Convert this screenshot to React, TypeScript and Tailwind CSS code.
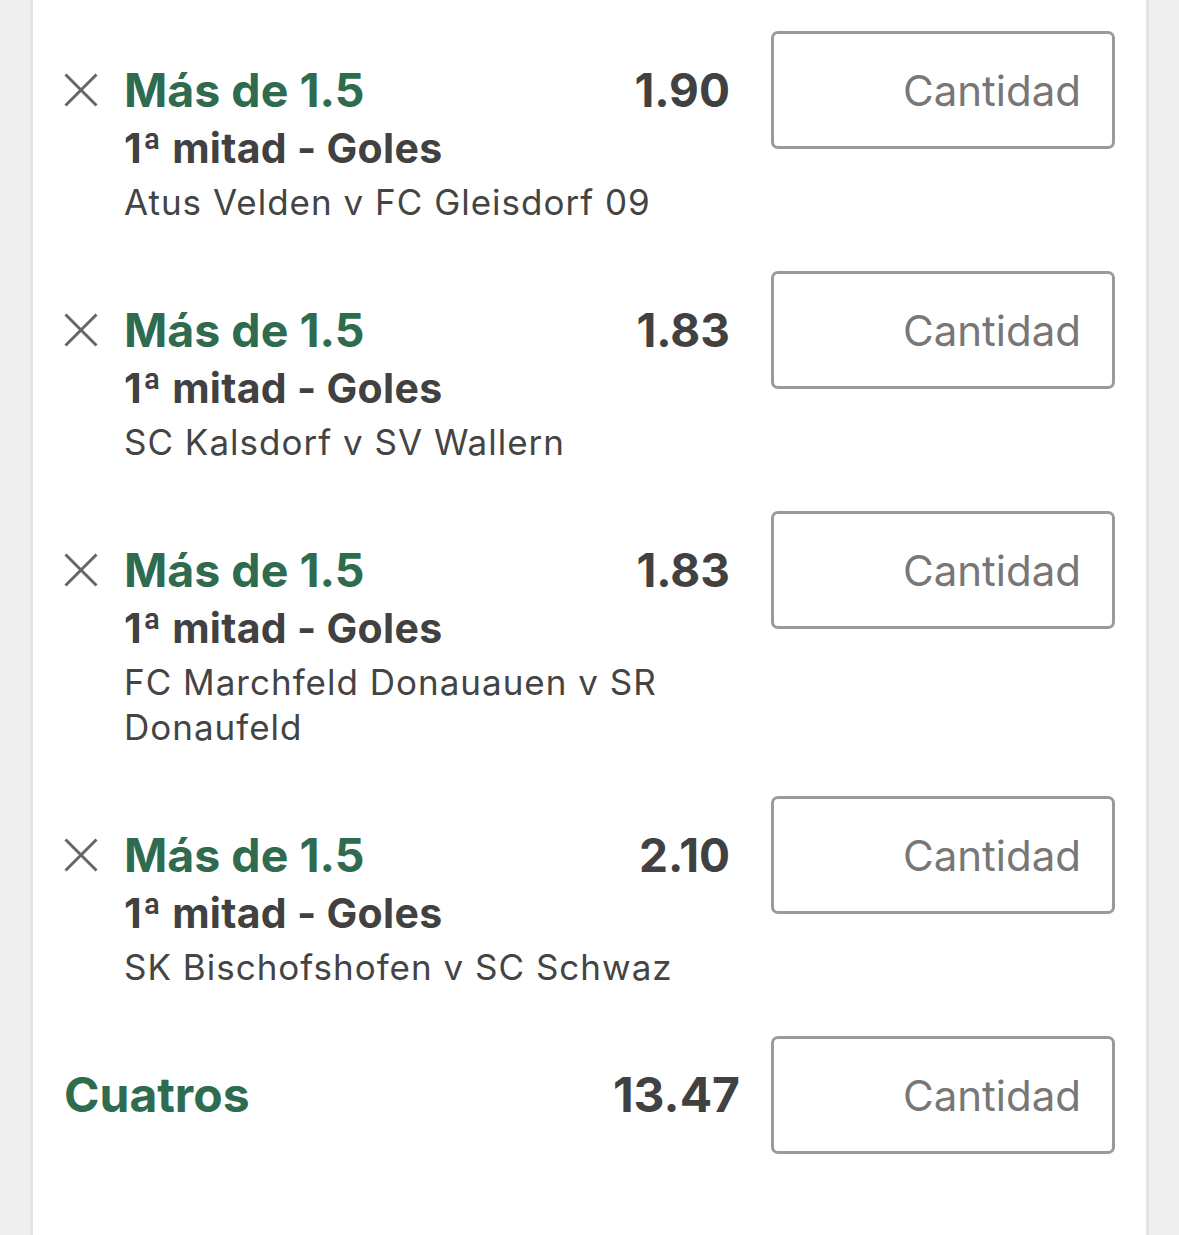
import React from 'react';

type Selection = {
  market: string;
  period: string;
  match: string;
  odds: string;
};

const selections: Selection[] = [
  { market: 'Más de 1.5', period: '1ª mitad - Goles', match: 'Atus Velden v FC Gleisdorf 09', odds: '1.90' },
  { market: 'Más de 1.5', period: '1ª mitad - Goles', match: 'SC Kalsdorf v SV Wallern', odds: '1.83' },
  { market: 'Más de 1.5', period: '1ª mitad - Goles', match: 'FC Marchfeld Donauauen v SR Donaufeld', odds: '1.83' },
  { market: 'Más de 1.5', period: '1ª mitad - Goles', match: 'SK Bischofshofen v SC Schwaz', odds: '2.10' },
];

const CloseIcon: React.FC = () => (
  <svg width="34" height="34" viewBox="0 0 34 34" className="shrink-0">
    <line x1="1.5" y1="1.5" x2="32.5" y2="32.5" stroke="#666666" strokeWidth="3" />
    <line x1="32.5" y1="1.5" x2="1.5" y2="32.5" stroke="#666666" strokeWidth="3" />
  </svg>
);

const StakeInput: React.FC = () => (
  <input
    type="text"
    placeholder="Cantidad"
    className="h-[118px] w-[344px] shrink-0 rounded-[7px] border-[3px] border-[#9a9a9a] bg-white pr-[31px] text-right text-[42px] text-[#444] outline-none placeholder:text-[#777]"
  />
);

const SelectionRow: React.FC<{ item: Selection }> = ({ item }) => (
  <div className="flex items-start">
    <div className="mt-[30px] flex h-[58px] w-[60px] shrink-0 items-center">
      <CloseIcon />
    </div>
    <div className="mt-[30px] w-[606px] shrink-0">
      <div className="flex h-[58px] items-center justify-between">
        <span className="text-[46.5px] font-bold leading-[58px] text-[#2e6b4f]">{item.market}</span>
        <span className="text-[46px] font-bold leading-[58px] text-[#414141]">{item.odds}</span>
      </div>
      <div className="text-[41px] font-bold leading-[58px] tracking-[0.3px] text-[#414141]">{item.period}</div>
      <div className="mt-[3px] text-[35px] leading-[45px] tracking-[1px] text-[#444]">{item.match}</div>
    </div>
    <div className="ml-[41px]">
      <StakeInput />
    </div>
  </div>
);

const App: React.FC = () => {
  return (
    <div className="min-h-[1235px] bg-[#efefef] px-[30px]" style={{ fontFamily: 'Inter, "Liberation Sans", sans-serif' }}>
      <div className="min-h-[1235px] border-x-[3px] border-[#e4e4e4] bg-white px-[31px] pt-[31px]">
        <div className="flex flex-col gap-[46px]">
          {selections.map((s, i) => (
            <SelectionRow key={i} item={s} />
          ))}
          <div className="flex items-center">
            <span className="flex-1 text-[48px] font-bold text-[#2e6b4f]">Cuatros</span>
            <span className="mr-[31px] text-[48px] font-bold text-[#414141]">13.47</span>
            <StakeInput />
          </div>
        </div>
      </div>
    </div>
  );
};

export default App;
